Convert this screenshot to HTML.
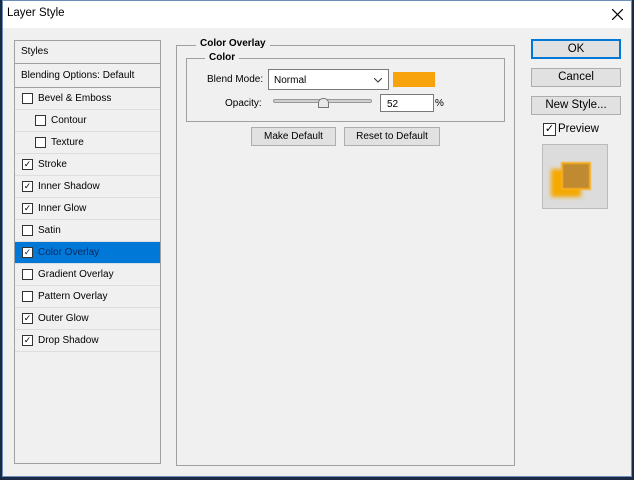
<!DOCTYPE html>
<html><head><style>
*{box-sizing:border-box;margin:0;padding:0}
body{width:634px;height:480px;overflow:hidden;background:#1b2a44;font-family:"Liberation Sans",sans-serif;font-size:10px;color:#000;position:relative}
.win{position:absolute;left:2px;top:0;width:630px;height:477px;background:#f0f0f0;border:1px solid #6b8fb8}
.title{position:absolute;left:0;top:0;width:100%;height:27px;background:#fff;font-size:11.5px;padding:6px 0 0 4px}
.abs{position:absolute}
.list{left:11px;top:39px;width:147px;height:424px;border:1px solid #a0a0a0}
.row{position:absolute;left:0;width:145px;height:22px;border-bottom:1px solid #ddd;line-height:21px;padding-left:6px}
.cb{position:absolute;top:5px;width:11px;height:11px;border:1px solid #333;background:#fff;font-size:9px;line-height:9px;text-align:center}
.sel{background:#0078d7}
.fs{border:1px solid #a0a0a0}
.btn{position:absolute;height:19px;border:1px solid #adadad;background:#e1e1e1;text-align:center;line-height:17px}
</style></head><body>
<div class="win">
<div class="title">Layer Style<svg class="abs" style="right:8px;top:8px" width="11" height="11"><path d="M0 0L11 11M11 0L0 11" stroke="#000" stroke-width="1.2"/></svg></div>
<div class="abs list">
<div class="row" style="top:0;height:23px;border-bottom:1px solid #a0a0a0">Styles</div>
<div class="row" style="top:23px;height:24px;line-height:23px;border-bottom:1px solid #a0a0a0">Blending Options: Default</div>
<div class="row" style="top:47px"><span class="cb" style="left:7px"></span><span style="padding-left:17px">Bevel &amp; Emboss</span></div>
<div class="row" style="top:69px"><span class="cb" style="left:20px"></span><span style="padding-left:30px">Contour</span></div>
<div class="row" style="top:91px"><span class="cb" style="left:20px"></span><span style="padding-left:30px">Texture</span></div>
<div class="row" style="top:113px"><span class="cb" style="left:7px">✓</span><span style="padding-left:17px">Stroke</span></div>
<div class="row" style="top:135px"><span class="cb" style="left:7px">✓</span><span style="padding-left:17px">Inner Shadow</span></div>
<div class="row" style="top:157px"><span class="cb" style="left:7px">✓</span><span style="padding-left:17px">Inner Glow</span></div>
<div class="row" style="top:179px"><span class="cb" style="left:7px"></span><span style="padding-left:17px">Satin</span></div>
<div class="row sel" style="top:201px;color:#0a2a60"><span class="cb" style="left:7px">✓</span><span style="padding-left:17px">Color Overlay</span></div>
<div class="row" style="top:223px"><span class="cb" style="left:7px"></span><span style="padding-left:17px">Gradient Overlay</span></div>
<div class="row" style="top:245px"><span class="cb" style="left:7px"></span><span style="padding-left:17px">Pattern Overlay</span></div>
<div class="row" style="top:267px"><span class="cb" style="left:7px">✓</span><span style="padding-left:17px">Outer Glow</span></div>
<div class="row" style="top:289px"><span class="cb" style="left:7px">✓</span><span style="padding-left:17px">Drop Shadow</span></div>
</div>
<div class="abs fs" style="left:173px;top:44px;width:339px;height:421px"></div>
<div class="abs" style="left:193px;top:37px;background:#f0f0f0;padding:0 4px;font-weight:bold">Color Overlay</div>
<div class="abs fs" style="left:183px;top:57px;width:319px;height:64px"></div>
<div class="abs" style="left:202px;top:51px;background:#f0f0f0;padding:0 4px;font-weight:bold">Color</div>
<div class="abs" style="left:204px;top:73px">Blend Mode:</div>
<div class="abs" style="left:265px;top:68px;width:121px;height:21px;border:1px solid #7a7a7a;background:#fff;padding:5px 0 0 5px">Normal<svg class="abs" style="right:6px;top:8px" width="8" height="5"><path d="M0 0L4 4L8 0" stroke="#333" fill="none"/></svg></div>
<div class="abs" style="left:390px;top:71px;width:42px;height:15px;background:#f8a30c"></div>
<div class="abs" style="left:222px;top:97px">Opacity:</div>
<div class="abs" style="left:270px;top:98px;width:99px;height:4px;background:#d0d0d0;border:1px solid #999;border-radius:2px"></div>
<div class="abs" style="left:315px;top:97px;width:11px;height:10px;background:#e8e8e8;border:1px solid #777;border-radius:5px 5px 0 0"></div>
<div class="abs" style="left:377px;top:93px;width:54px;height:18px;border:1px solid #7a7a7a;background:#fff;padding:4px 0 0 6px">52</div>
<div class="abs" style="left:432px;top:97px">%</div>
<div class="btn" style="left:248px;top:126px;width:85px">Make Default</div>
<div class="btn" style="left:341px;top:126px;width:96px">Reset to Default</div>
<div class="btn" style="left:528px;top:38px;width:90px;height:20px;border:2px solid #0078d7;font-size:11.5px;line-height:16px">OK</div>
<div class="btn" style="left:528px;top:67px;width:90px;font-size:11.5px">Cancel</div>
<div class="btn" style="left:528px;top:95px;width:90px;font-size:11.5px">New Style...</div>
<div class="abs cb" style="left:540px;top:122px;width:13px;height:13px;font-size:11px;line-height:11px">✓</div>
<div class="abs" style="left:555px;top:122px;font-size:11.5px">Preview</div>
<div class="abs" style="left:539px;top:143px;width:66px;height:65px;background:#dcdcdc;border:1px solid #bbb">
<div class="abs" style="left:8px;top:24px;width:30px;height:28px;background:#f5a800;filter:blur(2px)"></div>
<div class="abs" style="left:18px;top:17px;width:30px;height:28px;background:#c08a30;border:2px solid #f8b020;filter:blur(0.6px)"></div>
</div>
</div>
</body></html>
